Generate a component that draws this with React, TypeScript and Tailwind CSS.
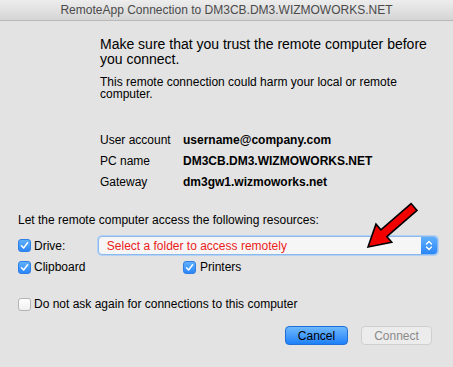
import React from 'react';

const font = { fontFamily: '"Liberation Sans", Arial, sans-serif' };

function Check({ checked = true }: { checked?: boolean }) {
  if (!checked) {
    return (
      <span className="inline-block w-[13px] h-[13px] shrink-0 rounded-[3px] border border-[#b4b4b4] bg-gradient-to-b from-[#ffffff] to-[#f0f0f0]" />
    );
  }
  return (
    <span className="inline-flex items-center justify-center w-[13px] h-[13px] shrink-0 rounded-[3px] border border-[#2f7fe6] bg-gradient-to-b from-[#5fb0fc] to-[#2a86f8]">
      <svg width="9" height="9" viewBox="0 0 9 9">
        <path d="M1.5 4.8 L3.6 7 L7.6 1.8" fill="none" stroke="#fff" strokeWidth="1.5" strokeLinecap="round" strokeLinejoin="round" />
      </svg>
    </span>
  );
}

function Arrow() {
  return (
    <svg className="absolute left-0 top-0 pointer-events-none" width="453" height="367">
      <g transform="translate(368 247) rotate(-41)">
        <polygon
          points="0,0 21,-12 21,-4.5 61,-4.5 61,4.5 21,4.5 21,12"
          fill="#f20000"
          stroke="#000"
          strokeWidth="1.6"
          strokeLinejoin="miter"
        />
      </g>
    </svg>
  );
}

export default function App() {
  return (
    <div className="relative w-[453px] h-[367px] overflow-hidden bg-[#e3e3e3] text-black flex flex-col" style={font}>
      <div className="h-[21px] shrink-0 flex items-center justify-center bg-gradient-to-b from-[#ededed] to-[#d5d5d5] border-b border-[#b9b9b9] text-[12px] text-[#4a4a4a]">
        RemoteApp Connection to DM3CB.DM3.WIZMOWORKS.NET
      </div>

      <div className="pl-[100px] pr-[10px] mt-[16px]">
        <p className="text-[14px] leading-[15px]">
          Make sure that you trust the remote computer before you connect.
        </p>
        <p className="mt-[9px] text-[12px] leading-[12px] pr-[10px]">
          This remote connection could harm your local or remote computer.
        </p>

        <div className="mt-[29px] text-[12px]">
          {[
            ['User account', 'username@company.com'],
            ['PC name', 'DM3CB.DM3.WIZMOWORKS.NET'],
            ['Gateway', 'dm3gw1.wizmoworks.net'],
          ].map(([label, value]) => (
            <div key={label} className="flex h-[21px] items-center">
              <span className="w-[83px]">{label}</span>
              <span className="font-bold">{value}</span>
            </div>
          ))}
        </div>
      </div>

      <div className="pl-[18px] pr-[15px] mt-[20px] text-[12px]">
        <div className="leading-[16px]">Let the remote computer access the following resources:</div>

        <div className="mt-[8px] flex items-center h-[19px]">
          <div className="flex items-center gap-[3px] w-[80px]">
            <Check />
            <span>Drive:</span>
          </div>
          <div className="flex items-stretch w-[341px] h-[19px] rounded-[4px] border border-[#8cb8ec] shadow-[0_0_0_1px_#b3d2f5] bg-[#f6f6f6] overflow-hidden">
            <span className="flex-1 pl-[8px] flex items-center text-[#ec1c1c] text-[12px]">
              Select a folder to access remotely
            </span>
            <span className="w-[16px] flex items-center justify-center bg-gradient-to-b from-[#5fb0fc] to-[#2a86f8]">
              <svg width="8" height="13" viewBox="0 0 8 13">
                <path d="M1.5 5 L4 2.5 L6.5 5 M1.5 8 L4 10.5 L6.5 8" fill="none" stroke="#fff" strokeWidth="1.3" strokeLinecap="round" strokeLinejoin="round" />
              </svg>
            </span>
          </div>
        </div>

        <div className="mt-[3px] flex items-center h-[18px]">
          <div className="flex items-center gap-[3px] w-[165px]">
            <Check />
            <span>Clipboard</span>
          </div>
          <div className="flex items-center gap-[4px]">
            <Check />
            <span>Printers</span>
          </div>
        </div>

        <div className="mt-[19px] flex items-center gap-[3px] h-[18px]">
          <Check checked={false} />
          <span>Do not ask again for connections to this computer</span>
        </div>

        <div className="mt-[13px] flex justify-end gap-[13px] pr-[6px]">
          <button className="w-[63px] h-[19px] rounded-[4px] border border-[#1f6fd8] bg-gradient-to-b from-[#6db8fc] to-[#1b80f9] text-[12px] text-black">
            Cancel
          </button>
          <button className="w-[71px] h-[19px] rounded-[4px] border border-[#cfcfcf] bg-[#ececec] text-[12px] text-[#8a8a8a]">
            Connect
          </button>
        </div>
      </div>

      <Arrow />
    </div>
  );
}
